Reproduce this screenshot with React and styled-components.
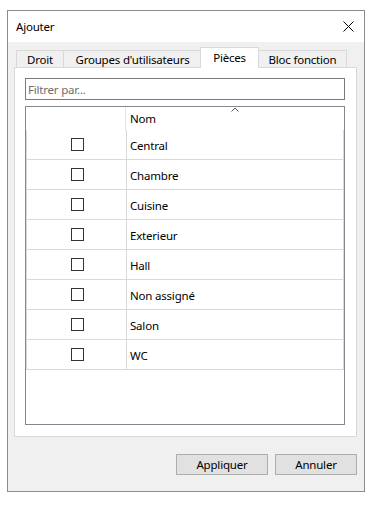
import React from "react";
import styled, { createGlobalStyle } from "styled-components";

const Global = createGlobalStyle`
  html, body { margin: 0; padding: 0; background: #ffffff; }
  body { font-family: "Noto Sans", "DejaVu Sans", sans-serif; font-size: 11.5px; letter-spacing: -0.2px; color: #000; }
  * { box-sizing: border-box; }
`;

const Screen = styled.div`
  padding: 10px 0 0 7px;
`;

const Window = styled.div`
  width: 358px;
  height: 482px;
  border: 1px solid #8c8c8c;
  background: #f0f0f0;
  display: flex;
  flex-direction: column;
`;

const TitleBar = styled.div`
  height: 31px;
  background: #ffffff;
  display: flex;
  align-items: center;
  justify-content: space-between;
  padding: 0 10px 0 8px;
  flex-shrink: 0;
`;

const Title = styled.span`
  line-height: 14px;
`;

const CloseBtn = styled.svg`
  width: 11px;
  height: 11px;
  display: block;
`;

const Body = styled.div`
  flex: 1;
  display: flex;
  flex-direction: column;
  padding: 5px 7px 0 6px;
`;

const TabStrip = styled.div`
  display: flex;
  align-items: flex-end;
  height: 21px;
  padding-left: 2px;
  margin-bottom: -1px;
  position: relative;
  z-index: 1;
`;

const Tab = styled.div`
  width: ${(p) => p.$w}px;
  height: ${(p) => (p.$active ? 21 : 17)}px;
  margin-left: ${(p) => (p.$first ? 0 : p.$active ? -2 : -1)}px;
  margin-bottom: ${(p) => (p.$active ? 0 : 1)}px;
  border: 1px solid #d9d9d9;
  border-bottom: none;
  background: ${(p) => (p.$active ? "#ffffff" : "#f0f0f0")};
  position: relative;
  z-index: ${(p) => (p.$active ? 2 : 1)};
  display: flex;
  align-items: ${(p) => (p.$active ? "flex-start" : "center")};
  padding-top: ${(p) => (p.$active ? 3 : 1)}px;
  justify-content: center;
  line-height: 14px;
  white-space: nowrap;
`;

const Panel = styled.div`
  width: 343px;
  height: 370px;
  background: #ffffff;
  border: 1px solid #d9d9d9;
  padding: 10px 10px 11px 10px;
  display: flex;
  flex-direction: column;
`;

const FilterInput = styled.div`
  width: 320px;
  height: 22px;
  border: 1px solid #7a7a7a;
  background: #ffffff;
  color: #6d6d6d;
  display: flex;
  align-items: center;
  padding-left: 2px;
  flex-shrink: 0;
`;

const Grid = styled.div`
  margin-top: 6px;
  width: 320px;
  flex: 1;
  border: 1px solid #828790;
  background: #ffffff;
  display: flex;
  flex-direction: column;
`;

const HeaderRow = styled.div`
  height: 23px;
  display: grid;
  grid-template-columns: 99px 1fr;
  flex-shrink: 0;
`;

const HeaderCell = styled.div`
  position: relative;
  border-left: ${(p) => (p.$divider ? "1px solid #e5e5e5" : "none")};
  padding: 5px 0 0 4px;
  line-height: 14px;
`;

const SortCaret = styled.svg`
  position: absolute;
  top: 0;
  left: 50%;
  margin-left: -4px;
  width: 8px;
  height: 5px;
`;

const Row = styled.div`
  height: 30px;
  display: grid;
  grid-template-columns: 99px 1fr;
  border-left: 1px solid #d9d9d9;
  border-right: 1px solid #d9d9d9;
  border-bottom: 1px solid #d9d9d9;
  flex-shrink: 0;
`;

const CheckCell = styled.div`
  display: flex;
  align-items: center;
  justify-content: center;
  padding-left: 1px;
`;

const CheckBox = styled.div`
  width: 13px;
  height: 13px;
  border: 1px solid #333333;
  background: #ffffff;
`;

const NameCell = styled.div`
  border-left: 1px solid #d9d9d9;
  display: flex;
  align-items: center;
  padding: 1px 0 0 3px;
`;

const Footer = styled.div`
  display: flex;
  justify-content: flex-end;
  gap: 7px;
  padding: 17px 0 0 0;
`;

const Button = styled.div`
  width: ${(p) => p.$w}px;
  height: 21px;
  background: #e1e1e1;
  border: 1px solid #adadad;
  display: flex;
  align-items: center;
  justify-content: center;
`;

const tabs = [
  { label: "Droit", w: 48 },
  { label: "Groupes d'utilisateurs", w: 139 },
  { label: "Pièces", w: 59, active: true },
  { label: "Bloc fonction", w: 89 },
];

const rooms = ["Central", "Chambre", "Cuisine", "Exterieur", "Hall", "Non assigné", "Salon", "WC"];

export default function App() {
  return (
    <>
      <Global />
      <Screen>
        <Window>
          <TitleBar>
            <Title>Ajouter</Title>
            <CloseBtn viewBox="0 0 11 11">
              <path d="M0.5 0.5 L10.5 10.5 M10.5 0.5 L0.5 10.5" stroke="#000" strokeWidth="1" fill="none" />
            </CloseBtn>
          </TitleBar>
          <Body>
            <TabStrip>
              {tabs.map((t, i) => (
                <Tab key={t.label} $w={t.w} $active={t.active} $first={i === 0}>
                  {t.label}
                </Tab>
              ))}
            </TabStrip>
            <Panel>
              <FilterInput>Filtrer par...</FilterInput>
              <Grid>
                <HeaderRow>
                  <HeaderCell />
                  <HeaderCell $divider>
                    Nom
                    <SortCaret viewBox="0 0 8 5">
                      <path d="M0.5 4.5 L4 1 L7.5 4.5" stroke="#555" strokeWidth="1" fill="none" />
                    </SortCaret>
                  </HeaderCell>
                </HeaderRow>
                {rooms.map((r) => (
                  <Row key={r}>
                    <CheckCell>
                      <CheckBox />
                    </CheckCell>
                    <NameCell>{r}</NameCell>
                  </Row>
                ))}
              </Grid>
            </Panel>
            <Footer>
              <Button $w={92}>Appliquer</Button>
              <Button $w={82}>Annuler</Button>
            </Footer>
          </Body>
        </Window>
      </Screen>
    </>
  );
}
